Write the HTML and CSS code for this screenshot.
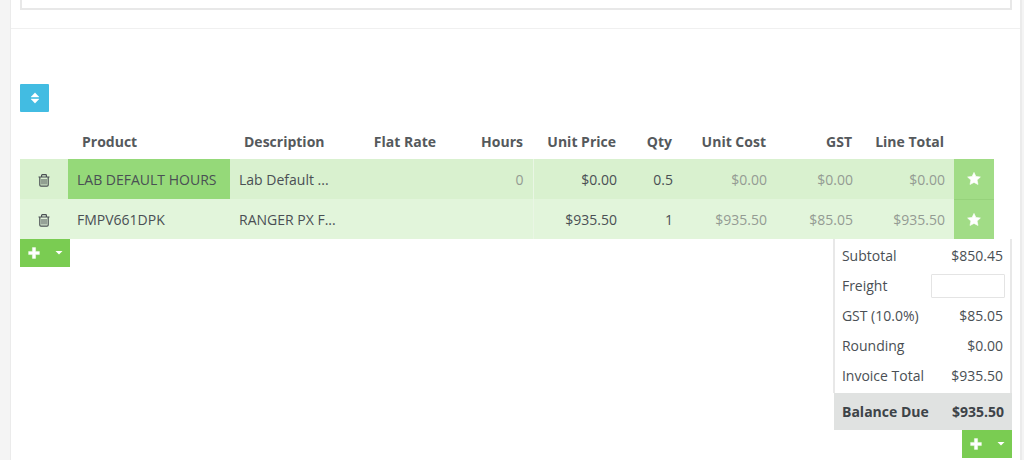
FILE: index.html
```html
<!DOCTYPE html>
<html lang="en">
<head>
    <meta charset="UTF-8">
    <meta name="viewport" content="width=device-width, initial-scale=1.0">
    <title>Invoice</title>
    <link rel="stylesheet" href="styles.css">
</head>
<body>
    <!-- Icons -->
    <svg class="icon-defs" width="0" height="0" aria-hidden="true">
        <symbol id="icon-sort" viewBox="0 0 10 12">
            <path d="M5 0.8 L9 5 H1 Z M1 7 H9 L5 11.2 Z" stroke="currentColor" stroke-width="0.4" stroke-linejoin="round"/>
        </symbol>
        <symbol id="icon-trash" viewBox="0 0 12 13">
            <path d="M0.5 3 H11.5 M3.6 3 V1.4 Q3.6 0.7 4.3 0.7 H7.7 Q8.4 0.7 8.4 1.4 V3 M1.8 3 V11 Q1.8 12.2 3 12.2 H9 Q10.2 12.2 10.2 11 V3" fill="none" stroke="currentColor" stroke-width="1.2"/>
            <path d="M4 5 V10.5 M6 5 V10.5 M8 5 V10.5" fill="none" stroke="currentColor"/>
        </symbol>
        <symbol id="icon-plus" viewBox="0 0 12 12">
            <path d="M4.4 0.6 H7.6 V4.4 H11.4 V7.6 H7.6 V11.4 H4.4 V7.6 H0.6 V4.4 H4.4 Z" stroke="currentColor" stroke-width="0.4" stroke-linejoin="round"/>
        </symbol>
        <symbol id="icon-caret" viewBox="0 0 8 4">
            <path d="M0.5 0 H7.5 L4 3.6 Z"/>
        </symbol>
        <symbol id="icon-star" viewBox="0 0 14 13">
            <path d="M7 0.4 L8.9 4.4 L13.4 5 L10.1 8.1 L11 12.5 L7 10.4 L3 12.5 L3.9 8.1 L0.6 5 L5.1 4.4 Z" stroke="currentColor" stroke-width="0.6" stroke-linejoin="round"/>
        </symbol>
    </svg>

    <main class="panel">
        <section class="notes">
            <textarea class="notes-input" rows="1" aria-label="Notes"></textarea>
        </section>

        <section class="invoice">
            <button class="btn sort-btn" type="button" aria-label="Sort lines">
                <svg class="icon" width="10" height="12"><use href="#icon-sort"/></svg>
            </button>

            <!-- Line items -->
            <table class="lines">
                <colgroup>
                    <col class="col-delete">
                    <col class="col-product">
                    <col class="col-description">
                    <col class="col-flat">
                    <col class="col-hours">
                    <col class="col-price">
                    <col class="col-qty">
                    <col class="col-cost">
                    <col class="col-gst">
                    <col class="col-total">
                    <col class="col-star">
                </colgroup>
                <thead>
                    <tr>
                        <td></td>
                        <th class="text" scope="col">Product</th>
                        <th class="text" scope="col">Description</th>
                        <th scope="col">Flat Rate</th>
                        <th scope="col">Hours</th>
                        <th scope="col">Unit Price</th>
                        <th scope="col">Qty</th>
                        <th scope="col">Unit Cost</th>
                        <th scope="col">GST</th>
                        <th scope="col">Line Total</th>
                        <td></td>
                    </tr>
                </thead>
                <tbody>
                    <tr class="line">
                        <td class="delete"><button class="icon-btn" type="button" aria-label="Delete line"><svg class="icon" width="12" height="13"><use href="#icon-trash"/></svg></button></td>
                        <td class="text selected">LAB DEFAULT HOURS</td>
                        <td class="text">Lab Default ...</td>
                        <td></td>
                        <td class="muted split">0</td>
                        <td>$0.00</td>
                        <td>0.5</td>
                        <td class="muted">$0.00</td>
                        <td class="muted">$0.00</td>
                        <td class="muted">$0.00</td>
                        <td class="star"><button class="icon-btn" type="button" aria-label="Favourite"><svg class="icon" width="14" height="13"><use href="#icon-star"/></svg></button></td>
                    </tr>
                    <tr class="line">
                        <td class="delete"><button class="icon-btn" type="button" aria-label="Delete line"><svg class="icon" width="12" height="13"><use href="#icon-trash"/></svg></button></td>
                        <td class="text">FMPV661DPK</td>
                        <td class="text">RANGER PX F...</td>
                        <td></td>
                        <td class="muted split"></td>
                        <td>$935.50</td>
                        <td>1</td>
                        <td class="muted">$935.50</td>
                        <td class="muted">$85.05</td>
                        <td class="muted">$935.50</td>
                        <td class="star"><button class="icon-btn" type="button" aria-label="Favourite"><svg class="icon" width="14" height="13"><use href="#icon-star"/></svg></button></td>
                    </tr>
                </tbody>
            </table>

            <div class="invoice-footer">
                <div class="btn-group">
                    <button class="btn add-btn" type="button" aria-label="Add line"><svg class="icon" width="12" height="12"><use href="#icon-plus"/></svg></button>
                    <button class="btn caret-btn" type="button" aria-label="More line types"><svg class="icon" width="8" height="4"><use href="#icon-caret"/></svg></button>
                </div>

                <!-- Totals -->
                <div class="summary">
                    <table class="totals">
                        <tbody>
                            <tr>
                                <th scope="row">Subtotal</th>
                                <td>$850.45</td>
                            </tr>
                            <tr>
                                <th scope="row"><label for="freight">Freight</label></th>
                                <td class="field"><input class="freight-input" id="freight" type="text"></td>
                            </tr>
                            <tr>
                                <th scope="row">GST (10.0%)</th>
                                <td>$85.05</td>
                            </tr>
                            <tr>
                                <th scope="row">Rounding</th>
                                <td>$0.00</td>
                            </tr>
                            <tr>
                                <th scope="row">Invoice Total</th>
                                <td>$935.50</td>
                            </tr>
                        </tbody>
                    </table>
                    <div class="balance">
                        <span>Balance Due</span>
                        <span>$935.50</span>
                    </div>
                    <div class="btn-group">
                        <button class="btn add-btn" type="button" aria-label="Add payment"><svg class="icon" width="12" height="12"><use href="#icon-plus"/></svg></button>
                        <button class="btn caret-btn" type="button" aria-label="More payment types"><svg class="icon" width="8" height="4"><use href="#icon-caret"/></svg></button>
                    </div>
                </div>
            </div>
        </section>
    </main>
</body>
</html>
```
FILE: styles.css
```css
* {
    box-sizing: border-box;
}

body {
    margin: 0;
    padding: 0 2px 0 10px;
    background-color: #f4f4f4;
    color: #4a4f54;
    font-family: "Open Sans", sans-serif;
    font-size: 14px;
    line-height: 20px;
}

.icon-defs {
    position: absolute;
}

.icon {
    display: block;
    fill: currentColor;
}

.panel {
    min-height: 100vh;
    background-color: #fff;
    border: solid #ebebeb;
    border-width: 0 2px 0 1px;
}

/* Notes */
.notes {
    padding: 0 8px 18px 9px;
    border-bottom: 1px solid #f0f0f0;
}

.notes-input {
    display: block;
    width: 100%;
    height: 10px;
    padding: 0;
    border: 2px solid #e8e8e8;
    border-top: 0;
    resize: none;
    overflow: hidden;
}

/* Buttons */
.btn {
    display: flex;
    align-items: center;
    justify-content: center;
    height: 28px;
    padding: 0;
    border: 0;
    color: #fff;
    cursor: pointer;
}

.sort-btn {
    width: 29px;
    border-radius: 1px;
    background-color: #42bce2;
}

.btn-group {
    display: flex;
}

.add-btn {
    width: 28px;
    background-color: #7acc52;
}

.caret-btn {
    width: 22px;
    background-color: #7acc52;
}

.icon-btn {
    display: block;
    margin: 0 auto;
    padding: 0;
    border: 0;
    background: none;
    color: inherit;
    cursor: pointer;
}

/* Line items */
.invoice {
    padding: 55px 8px 0 9px;
}

.lines {
    width: calc(100% - 18px);
    margin-top: 13px;
    border-collapse: collapse;
    table-layout: fixed;
}

.col-delete { width: 48px; }
.col-product { width: auto; }
.col-description { width: 108px; }
.col-flat { width: 108px; }
.col-hours { width: 87px; }
.col-price { width: 93px; }
.col-qty { width: 56px; }
.col-cost { width: 94px; }
.col-gst { width: 86px; }
.col-total { width: 92px; }
.col-star { width: 40px; }

.lines th,
.lines td {
    padding: 2px 9px 0;
    text-align: right;
    white-space: nowrap;
}

.lines th {
    height: 34px;
    padding: 0 10px;
    color: #55595c;
    font-weight: 700;
}

.lines .text {
    text-align: left;
}

.lines th.text {
    padding-left: 14px;
}

.line {
    height: 40px;
    background-color: #d9f1cf;
}

.line + .line {
    background-color: #e2f5db;
}

.line .selected {
    background-color: #95d979;
}

.line .muted {
    color: #949b93;
}

.line .split {
    border-right: 1px solid #e9f6e4;
}

.line .star {
    padding: 0;
    background-color: #a1dc86;
    color: #fff;
}

.line + .line .star {
    border-top: 1px solid #96d27b;
}

/* Totals */
.invoice-footer {
    display: flex;
    align-items: flex-start;
    justify-content: space-between;
}

.summary {
    display: flex;
    flex-direction: column;
    align-items: flex-end;
    width: 178px;
}

.totals {
    width: 100%;
    padding: 2px 0;
    border: solid #e8e8e8;
    border-width: 0 2px;
    border-spacing: 0;
}

.totals th,
.totals td {
    height: 30px;
    padding: 0 7px;
    font-weight: 400;
    text-align: left;
    white-space: nowrap;
}

.totals td {
    text-align: right;
}

.totals .field {
    padding: 0 5px 0 0;
}

.freight-input {
    display: block;
    width: 74px;
    height: 24px;
    margin-left: auto;
    padding: 0 6px;
    border: 1px solid #e4e4e4;
    border-radius: 1px;
    font: inherit;
    text-align: right;
}

.balance {
    display: flex;
    align-items: center;
    justify-content: space-between;
    width: 100%;
    height: 37px;
    padding: 0 8px;
    background-color: #e0e2e1;
    color: #3d4348;
    font-weight: 700;
}
```
